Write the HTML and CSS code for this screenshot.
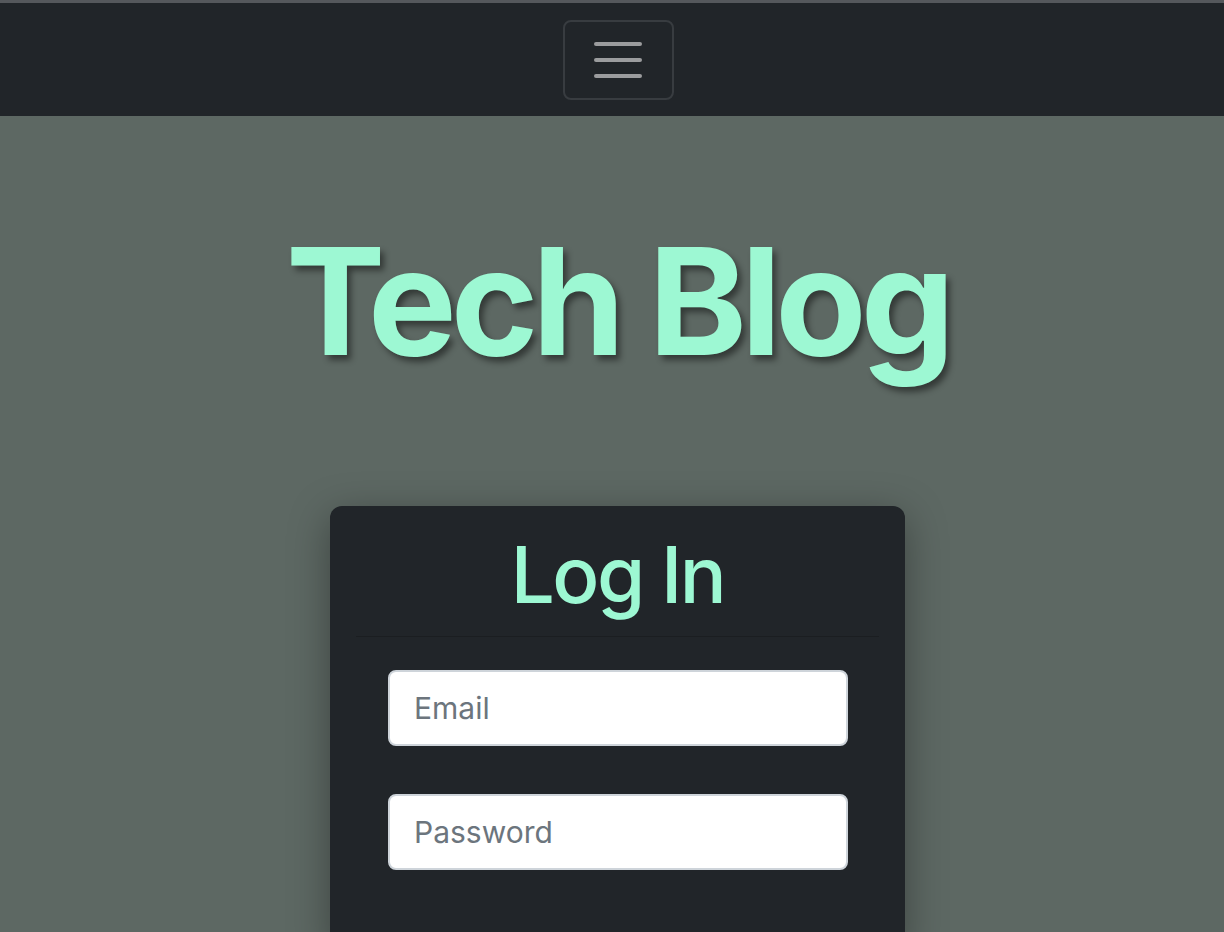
FILE: index.html
```html
<!DOCTYPE html>
<html lang="en">
<head>
<meta charset="utf-8">
<title>Tech Blog</title>
<link rel="stylesheet" href="styles.css">
</head>
<body>
<nav class="navbar">
  <button class="toggler" type="button" aria-label="Toggle navigation">
    <span class="bar"></span>
    <span class="bar"></span>
    <span class="bar"></span>
  </button>
</nav>
<main class="main">
  <h1 class="title">Tech Blog</h1>
  <section class="card">
    <header class="card-header">
      <h2 class="card-title">Log In</h2>
    </header>
    <form class="card-body">
      <input class="field" type="email" placeholder="Email">
      <input class="field" type="password" placeholder="Password">
    </form>
  </section>
</main>
</body>
</html>
```
FILE: styles.css
```css
html, body {
  margin: 0;
  padding: 0;
}
body {
  background: #5d6863;
  font-family: Inter, "Liberation Sans", Arial, sans-serif;
  min-height: 932px;
  overflow: hidden;
  border-top: 3px solid #55585c;
}
.navbar {
  background: #212529;
  height: 113px;
  padding-left: 12px;
  display: flex;
  align-items: center;
  justify-content: center;
}
.toggler {
  width: 111px;
  height: 80px;
  box-sizing: border-box;
  background: transparent;
  border: 2px solid #383c40;
  border-radius: 8px;
  display: flex;
  flex-direction: column;
  align-items: center;
  justify-content: center;
  gap: 12px;
  padding: 0;
}
.bar {
  display: block;
  width: 48px;
  height: 4px;
  border-radius: 2px;
  background: #9b9c9e;
}
.main {
  display: flex;
  flex-direction: column;
  align-items: center;
  padding-left: 11px;
}
.title {
  margin: 111px 0 0;
  font-size: 149px;
  line-height: 1;
  font-weight: 700;
  letter-spacing: -6px;
  color: #9df8d3;
  text-shadow: 4px 5px 6px rgba(0,0,0,0.45);
  white-space: nowrap;
}
.card {
  margin-top: 130px;
  width: 575px;
  background: #212529;
  border-radius: 12px;
  box-shadow: 0 10px 40px rgba(0,0,0,0.35);
  padding-bottom: 80px;
}
.card-header {
  margin: 0 26px;
  border-bottom: 1px solid #1b1e21;
  text-align: center;
  padding: 30px 0 22px;
}
.card-title {
  margin: 0;
  font-size: 78px;
  line-height: 1;
  font-weight: 500;
  letter-spacing: -2.5px;
  color: #9df8d3;
}
.card-body {
  display: flex;
  flex-direction: column;
  gap: 48px;
  padding: 33px 57px 0 58px;
}
.field {
  box-sizing: border-box;
  width: 460px;
  height: 76px;
  border: 2px solid #ced4da;
  border-radius: 8px;
  background: #fff;
  padding: 0 24px;
  font-family: inherit;
  font-size: 30px;
  color: #212529;
}
.field::placeholder {
  color: #6c757d;
}
```
